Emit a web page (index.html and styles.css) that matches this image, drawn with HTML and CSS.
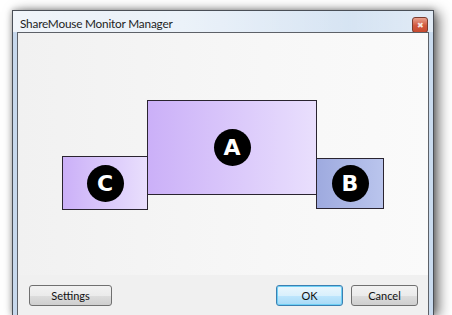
FILE: index.html
```html
<!DOCTYPE html>
<html lang="en">
<head>
    <meta charset="UTF-8">
    <title>ShareMouse Monitor Manager</title>
    <link rel="stylesheet" href="styles.css">
</head>
<body>
    <div class="window">
        <div class="titlebar">
            <span class="title">ShareMouse Monitor Manager</span>
            <span class="close">&#x2716;</span>
        </div>
        <div class="client">
            <div class="layout">
                <div class="monitor mon-a" style="left:129px;top:67px;width:168px;height:93px;"><span class="badge">A</span></div>
                <div class="monitor mon-c" style="left:44px;top:123px;width:84px;height:52px;"><span class="badge">C</span></div>
                <div class="monitor mon-b" style="left:298px;top:125px;width:66px;height:49px;"><span class="badge">B</span></div>
            </div>
            <div class="buttons">
                <button class="btn settings">Settings</button>
                <div class="spacer"></div>
                <button class="btn ok">OK</button>
                <button class="btn">Cancel</button>
            </div>
        </div>
    </div>
</body>
</html>
```

FILE: styles.css
```css
html, body {
    margin: 0;
    background: #fff;
    overflow: hidden;
    height: 315px;
}
body {
    padding: 10px 0 0 12px;
    box-sizing: border-box;
    font-family: "Lato", "Open Sans", sans-serif;
}
.window {
    width: 412px;
    height: 304px;
    border: 1px solid #4a4f57;
    border-bottom: none;
    background: linear-gradient(to right, #c7d8ec, #dce8f5 40%, #c9dbef);
    padding: 0 4px;
    box-shadow: 5px 2px 12px rgba(0,0,0,0.55), 0 0 6px rgba(0,0,0,0.3);
    display: flex;
    flex-direction: column;
}
.titlebar {
    height: 21px;
    display: flex;
    align-items: center;
    justify-content: space-between;
    background: linear-gradient(to right, rgba(255,255,255,0.75), rgba(255,255,255,0.4) 45%, rgba(255,255,255,0.15) 80%, rgba(255,255,255,0.45));
    margin: 0 -4px;
    padding: 0 5px 0 7px;
}
.title {
    font-size: 11.8px;
    letter-spacing: -0.2px;
    color: #1e1e1e;
    margin-top: 3px;
}
.close {
    width: 14px;
    height: 14px;
    margin-top: 7px;
    border: 1px solid #7a3b2e;
    border-radius: 3px;
    background: linear-gradient(#e9a18e, #d0573c 55%, #c84a2f);
    color: #f6e6e2;
    font-size: 8px;
    line-height: 14px;
    text-align: center;
}
.client {
    flex: 1;
    border: 1px solid #5d6168;
    border-bottom: none;
    background: #f0f0f0;
    display: flex;
    flex-direction: column;
}
.layout {
    position: relative;
    height: 242px;
    background: linear-gradient(to right, #f1f1f1, #f7f7f7 60%, #fafafa);
}
.monitor {
    position: absolute;
    border: 1px solid #2a2430;
    display: flex;
    align-items: center;
    justify-content: center;
}
.mon-a, .mon-c {
    background: linear-gradient(to right, #cbb0f8, #e9dffd);
}
.mon-b {
    background: linear-gradient(to right, #9eaadf, #bac5ed);
}
.badge {
    width: 37px;
    height: 37px;
    border-radius: 50%;
    background: #000;
    color: #fff;
    font-family: "DejaVu Sans", sans-serif;
    font-weight: bold;
    font-size: 22px;
    line-height: 37px;
    text-align: center;
}
.buttons {
    display: flex;
    align-items: flex-start;
    padding: 10px 10px 0 11px;
    gap: 8px;
}
.spacer {
    flex: 1;
}
.btn {
    height: 21px;
    width: 67px;
    border: 1px solid #707070;
    border-radius: 3px;
    background: linear-gradient(#f2f2f2, #ebebeb 50%, #dddddd 51%, #cfcfcf);
    font-family: "Lato", "Open Sans", sans-serif;
    font-size: 11px;
    color: #111;
    padding: 0;
}
.settings {
    width: 83px;
}
.ok {
    border-color: #3c7fb1;
    box-shadow: inset 0 0 0 1px #6fd0f5;
    background: linear-gradient(#eaf6fd, #d9f0fc 50%, #bee6fd 51%, #a7d9f5);
}
```
